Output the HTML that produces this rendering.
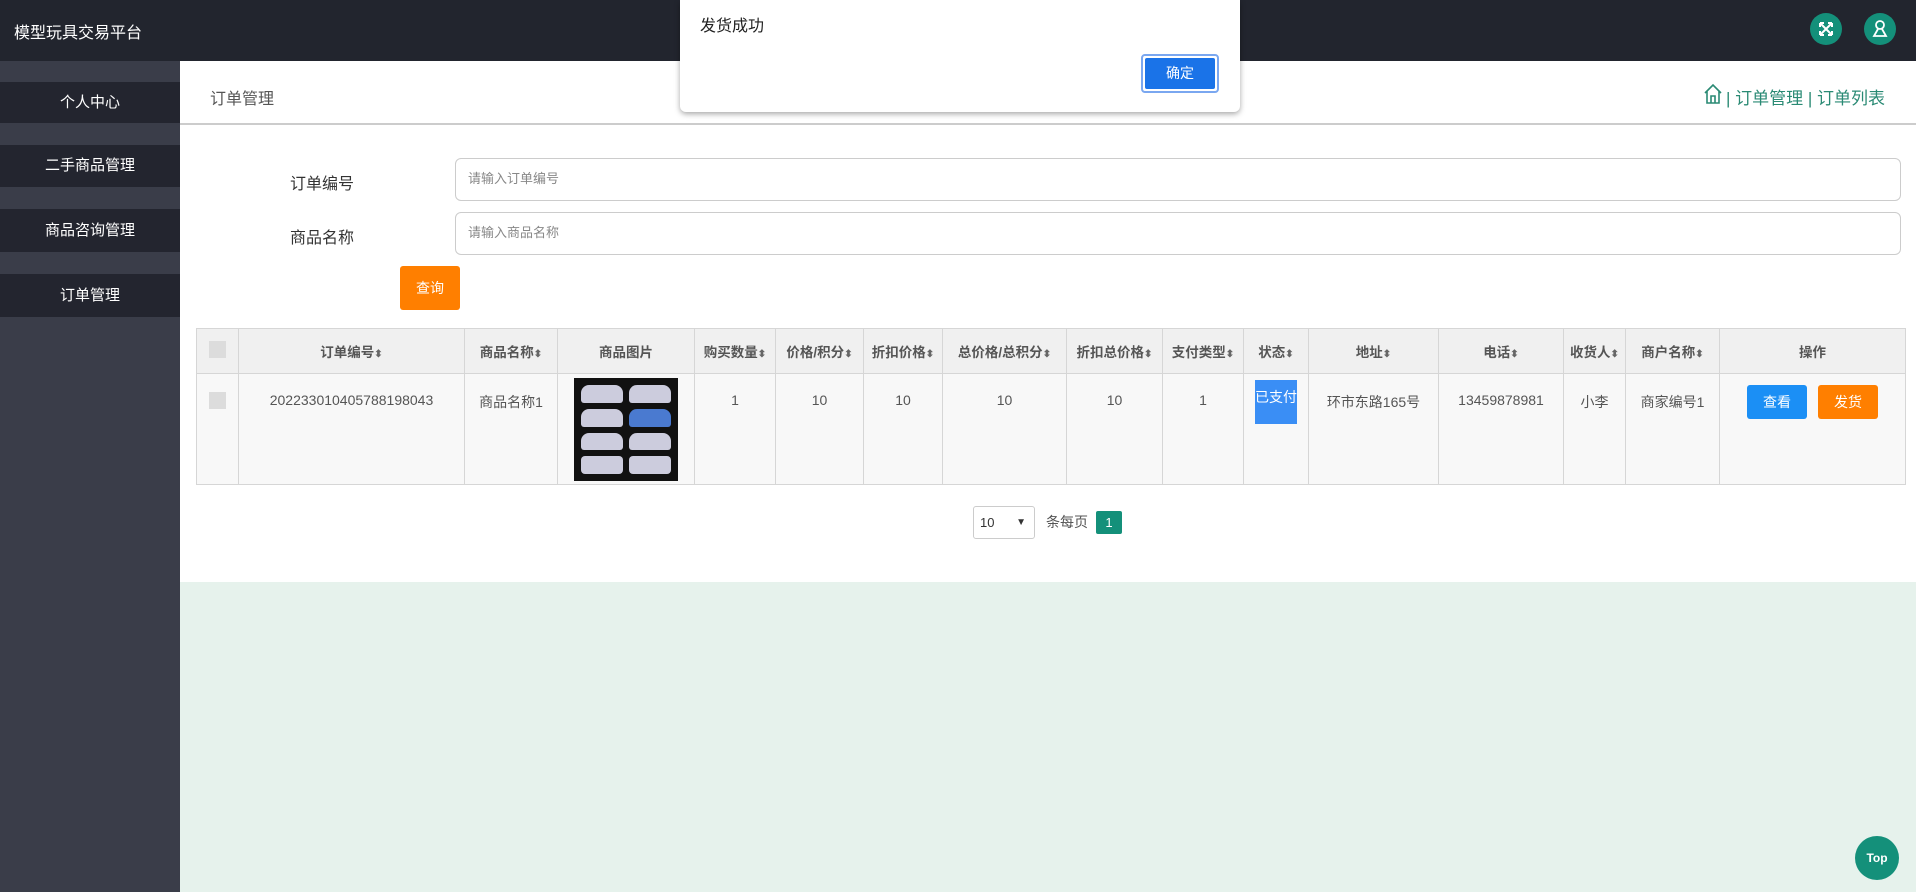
<!DOCTYPE html>
<html><head><meta charset="utf-8"><style>
*{box-sizing:border-box;margin:0;padding:0}
body{width:1916px;height:892px;overflow:hidden;position:relative;font-family:"Liberation Sans","Noto Sans CJK SC",sans-serif;background:#e6f2ec;color:#333}
.abs{position:absolute}
.hdr{left:0;top:0;width:1916px;height:61px;background:#22252e}
.side{left:0;top:61px;width:180px;height:831px;background:#3a3d49}
.si{position:absolute;left:0;width:180px;background:#23252f;color:#fff;font-size:15px;text-align:center}
.main{left:180px;top:61px;width:1736px;height:521px;background:#fff}
table{border-collapse:collapse;position:absolute;left:196px;top:328px;width:1709px;font-size:14px;color:#555;table-layout:fixed}
td,th{border:1px solid #d6d6d6;text-align:center;vertical-align:middle}
th{height:45px;background:#f0f0f0;font-weight:bold;font-size:13.5px;color:#555}
td{height:111px;background:#f8f8f8;vertical-align:top;padding-top:18px}
.s{font-size:10px;color:#666}
.cb{display:inline-block;width:17px;height:17px;background:#dcdcdc}
.inp{border:1px solid #ccc;border-radius:6px;background:#fff;font-size:13px;color:#888;padding-left:12px;line-height:40px}
</style></head><body>
<div class="abs hdr"></div>
<div class="abs" style="left:14px;top:19px;color:#fff;font-size:16px">模型玩具交易平台</div>
<div class="abs" style="left:1810px;top:13px;width:32px;height:32px;border-radius:50%;background:#14907a"></div>
<svg class="abs" style="left:1816px;top:19px" width="20" height="20" viewBox="0 0 20 20" fill="none" stroke="#fff" stroke-width="2"><path d="M4 4l12 12M16 4L4 16M4 4h4M4 4v4M16 4h-4M16 4v4M4 16h4M4 16v-4M16 16h-4M16 16v-4"/></svg>
<div class="abs" style="left:1864px;top:13px;width:32px;height:32px;border-radius:50%;background:#14907a"></div>
<svg class="abs" style="left:1870px;top:19px" width="20" height="20" viewBox="0 0 20 20" fill="none" stroke="#fff" stroke-width="1.8"><circle cx="10" cy="6" r="4"/><path d="M8 10L4 17h12l-4-7"/></svg>
<div class="abs side"></div>
<div class="si" style="top:82px;height:41px;line-height:41px">个人中心</div>
<div class="si" style="top:145px;height:42px;line-height:42px">二手商品管理</div>
<div class="si" style="top:209px;height:43px;line-height:43px">商品咨询管理</div>
<div class="si" style="top:274px;height:43px;line-height:43px">订单管理</div>
<div class="abs main"></div>
<div class="abs" style="left:210px;top:85px;font-size:16px;color:#555">订单管理</div>
<div class="abs" style="left:180px;top:123px;width:1736px;height:2px;background:#ccc"></div>
<svg class="abs" style="left:1703px;top:83px" width="20" height="22" viewBox="0 0 20 22" fill="none" stroke="#2a8a74" stroke-width="1.6"><path d="M2 10L10 2l8 8M4 8v12h12V8M8 20v-7h4v7"/></svg>
<div class="abs" style="left:1726px;top:84px;font-size:17px;color:#2a8a74">| 订单管理 | 订单列表</div>
<div class="abs" style="left:290px;top:170px;font-size:16px;color:#333">订单编号</div>
<div class="abs" style="left:290px;top:224px;font-size:16px;color:#333">商品名称</div>
<div class="abs inp" style="left:455px;top:158px;width:1446px;height:43px">请输入订单编号</div>
<div class="abs inp" style="left:455px;top:212px;width:1446px;height:43px">请输入商品名称</div>
<div class="abs" style="left:400px;top:266px;width:60px;height:44px;background:#ff7f00;border-radius:3px;color:#fff;font-size:14px;text-align:center;line-height:44px">查询</div>
<table>
<colgroup><col style="width:42px"><col style="width:226px"><col style="width:93px"><col style="width:137px"><col style="width:81px"><col style="width:88px"><col style="width:79px"><col style="width:124px"><col style="width:96px"><col style="width:81px"><col style="width:65px"><col style="width:130px"><col style="width:125px"><col style="width:62px"><col style="width:94px"><col style="width:186px"></colgroup>
<tr><th><span class="cb"></span></th><th>订单编号<span class="s">⬍</span></th><th>商品名称<span class="s">⬍</span></th><th>商品图片</th><th>购买数量<span class="s">⬍</span></th><th>价格/积分<span class="s">⬍</span></th><th>折扣价格<span class="s">⬍</span></th><th>总价格/总积分<span class="s">⬍</span></th><th>折扣总价格<span class="s">⬍</span></th><th>支付类型<span class="s">⬍</span></th><th>状态<span class="s">⬍</span></th><th>地址<span class="s">⬍</span></th><th>电话<span class="s">⬍</span></th><th>收货人<span class="s">⬍</span></th><th>商户名称<span class="s">⬍</span></th><th>操作</th></tr>
<tr><td><span class="cb"></span></td><td>20223301040578819804​3</td><td>商品名称1</td><td style="padding-top:4px"><div style="margin:0 auto;width:104px;height:103px;background:#111;display:grid;grid-template-columns:1fr 1fr;gap:6px;padding:7px"><div style="background:#ccd;border-radius:8px 8px 3px 3px"></div><div style="background:#ccd;border-radius:8px 8px 3px 3px"></div><div style="background:#ccd;border-radius:8px 8px 3px 3px"></div><div style="background:#4a7ad0;border-radius:8px 8px 3px 3px"></div><div style="background:#ccd;border-radius:8px 8px 3px 3px"></div><div style="background:#ccd;border-radius:8px 8px 3px 3px"></div><div style="background:#ccd;border-radius:4px"></div><div style="background:#ccd;border-radius:4px"></div></div></td><td>1</td><td>10</td><td>10</td><td>10</td><td>10</td><td>1</td><td style="padding-top:6px"><div style="margin:0 auto;width:42px;height:44px;background:#3a8ef5;color:#fff;line-height:34px;font-size:14px">已支付</div></td><td>环市东路165号</td><td>13459878981</td><td>小李</td><td>商家编号1</td><td style="padding-top:11px"><span style="display:inline-block;width:60px;height:34px;line-height:34px;background:#1b8ff5;color:#fff;border-radius:3px">查看</span><span style="display:inline-block;width:60px;height:34px;line-height:34px;background:#ff7f00;color:#fff;border-radius:3px;margin-left:11px">发货</span></td></tr>
</table>
<div class="abs" style="left:973px;top:506px;width:62px;height:33px;border:1px solid #ccc;border-radius:3px;background:#fff;font-size:13px;line-height:31px;padding-left:6px;color:#333">10<span style="position:absolute;right:8px;font-size:10px">▼</span></div>
<div class="abs" style="left:1046px;top:512px;font-size:14px;color:#555">条每页</div>
<div class="abs" style="left:1096px;top:511px;width:26px;height:23px;background:#14907a;color:#fff;font-size:13px;text-align:center;line-height:23px;border-radius:2px">1</div>
<div class="abs" style="left:680px;top:0;width:560px;height:112px;background:#fff;border-radius:0 0 6px 6px;box-shadow:0 2px 6px rgba(0,0,0,.35)"></div>
<div class="abs" style="left:700px;top:12px;font-size:16px;color:#222">发货成功</div>
<div class="abs" style="left:1141px;top:54px;width:78px;height:39px;border:2px solid #7aa7f0;border-radius:4px;padding:2px"><div style="width:100%;height:100%;background:#1a73e8;border-radius:2px;color:#fff;font-size:14px;text-align:center;line-height:31px">确定</div></div>
<div class="abs" style="left:1855px;top:836px;width:44px;height:44px;border-radius:50%;background:#14907a;color:#fff;font-size:12px;font-weight:bold;text-align:center;line-height:44px">Top</div>
</body></html>
